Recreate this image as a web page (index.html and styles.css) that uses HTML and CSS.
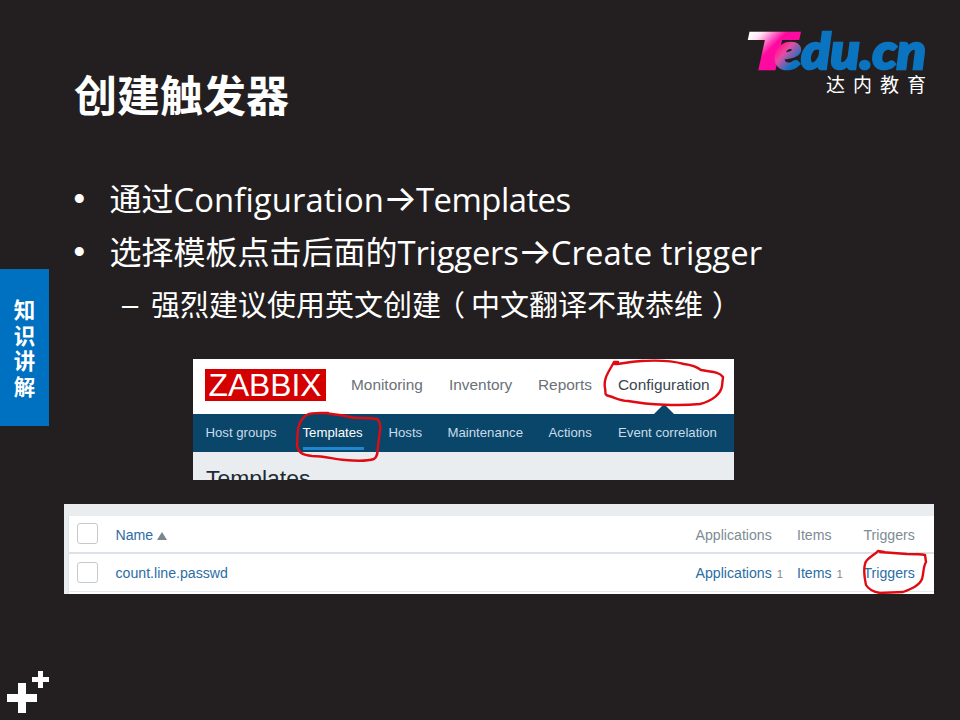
FILE: index.html
```html
<!DOCTYPE html>
<html lang="zh-CN">
<head>
<meta charset="utf-8">
<title>创建触发器</title>
<link rel="stylesheet" href="styles.css">
</head>
<body>
<main class="slide">
  <header class="header">
    <h1 class="title">创建触发器</h1>
    <svg class="logo" viewBox="745 25 185 75" role="img">
      <defs>
        <linearGradient id="tee" gradientUnits="userSpaceOnUse" x1="752" y1="32" x2="774" y2="54">
          <stop offset="0" stop-color="#fff"/><stop offset=".25" stop-color="#ffe3f4"/><stop offset=".8" stop-color="#ff0aa0"/><stop offset="1" stop-color="#ff0aa0"/>
        </linearGradient>
        <linearGradient id="edu" gradientUnits="userSpaceOnUse" x1="779" y1="48" x2="795" y2="62">
          <stop offset="0" stop-color="#ff1c8e"/><stop offset=".35" stop-color="#e34fa5"/><stop offset="1" stop-color="#0a74c0"/>
        </linearGradient>
      </defs>
      <text class="brand tee" x="745.5" y="69" font-size="50" textLength="50" lengthAdjust="spacingAndGlyphs" fill="url(#tee)" stroke="url(#tee)">T</text>
      <text class="brand heavy" x="775" y="69" font-size="49.5" textLength="151" lengthAdjust="spacingAndGlyphs" fill="url(#edu)" stroke="url(#edu)">edu.cn</text>
      <text class="brand-cn" x="826" y="92" font-size="19" textLength="100">达内教育</text>
    </svg>
  </header>

  <aside class="tab"><span>知</span><span>识</span><span>讲</span><span>解</span></aside>

  <section class="content">
    <ul class="points">
      <li class="point"><span class="dot">•</span><p>通过<span class="latin config">Configuration</span><span class="arrow">→</span><span class="latin templates">Templates</span></p></li>
      <li class="point"><span class="dot">•</span><p>选择模板点击后面的<span class="latin triggers">Triggers</span><span class="arrow">→</span><span class="latin create">Create trigger</span></p></li>
      <li class="point sub"><span class="dash">–</span><p>强烈建议使用英文创建<span class="open">（</span>中文翻译不敢恭维<span class="close">）</span></p></li>
    </ul>

    <div class="shot menu-shot">
      <nav class="main-nav">
        <span class="zabbix"><svg viewBox="0 0 121 32"><text x="3.5" y="27.2" textLength="113" lengthAdjust="spacingAndGlyphs">ZABBIX</text></svg></span>
        <span>Monitoring</span><span>Inventory</span><span>Reports</span><span class="current">Configuration</span>
      </nav>
      <nav class="sub-nav">
        <span>Host groups</span><span class="active">Templates</span><span>Hosts</span><span>Maintenance</span><span>Actions</span><span>Event correlation</span>
      </nav>
      <h2 class="heading">Templates</h2>
      <svg class="marks" viewBox="193 359 541 121">
        <path d="M653 415l11-11 11 11z" fill="#0a466a"/>
        <g class="pen">
          <path d="M618 362 L614 362 C610 370 603 378 605 388 C606 393 604 395 609 396 C616 398 620 401 628 401 C650 405 680 406 700 404 C712 401 721 394 722 386 L723 377 C719 371 710 372 701 370 C697 367 692 365 684 364 C665 359 648 361 642 361 C632 361 622 364 615 364"/>
          <path d="M328 413 C318 413 308 412 304 417 C296 425 298 436 297 445 C298 453 303 455 312 456 C325 456 333 459 345 460 C356 461 368 461 374 459 C379 456 377 449 379 438 C380 431 382 422 377 419 C365 417 358 419 350 417 C338 414 333 415 326 413"/>
        </g>
      </svg>
    </div>

    <div class="shot table-shot">
      <div class="table">
        <div class="row head"><i class="check"></i><span class="link">Name <b class="sort"></b></span><span>Applications</span><span>Items</span><span>Triggers</span></div>
        <div class="row"><i class="check"></i><span class="link">count.line.passwd</span><span class="link">Applications <small>1</small></span><span class="link">Items <small>1</small></span><span class="link">Triggers</span></div>
      </div>
      <svg class="marks" viewBox="64 504 870 90">
        <path class="pen" d="M884 552 L878 551 C875 555 866 558 865 564 C863 572 865 580 866 585 C869 590 874 592 880 593 L903 592 C911 589 919 586 922 579 C924 572 923 567 926 562 L925 555 C920 554 914 554 907 554 L880 552"/>
      </svg>
    </div>
  </section>

  <footer class="footer">
    <svg class="crosses" viewBox="0 0 60 60"><path d="M18 23h8v11h11v8H26v11h-8V42H7v-8h11zM38 11h5v6h6v5h-6v6h-5v-6h-6v-5h6z" fill="#fff"/></svg>
  </footer>
</main>
</body>
</html>
```
FILE: styles.css
```css
* { box-sizing: border-box; }
body { margin: 0; background: #231f20; }
p, h1, h2, ul { margin: 0; padding: 0; }

.slide {
  width: 960px;
  height: 720px;
  overflow: hidden;
  display: grid;
  grid-template-columns: 64px 870px;
  grid-template-rows: 172px 488px 60px;
  background: #231f20;
  color: #fff;
  font-family: "Noto Sans CJK SC", sans-serif;
}

.header {
  grid-column: 1 / -1;
  width: 960px;
  display: flex;
  justify-content: space-between;
  padding: 25px 30px 0 74px;
}
.title { font-size: 43px; line-height: 60px; margin-top: 38px; font-weight: 700; white-space: nowrap; }
.logo { width: 185px; height: 75px; overflow: visible; }
.brand { font-family: Lato, sans-serif; font-weight: 900; font-style: italic; }
.tee { stroke-width: 2.4; }
.heavy { stroke-width: 2.6; }
.brand-cn { font-family: "Noto Sans CJK SC", sans-serif; fill: #fff; }

.tab {
  width: 49px;
  height: 157px;
  margin-top: 97px;
  padding-top: 27px;
  background: #0070c0;
  display: flex;
  flex-direction: column;
  align-items: center;
  font-size: 21.5px;
  font-weight: 700;
  line-height: 25.5px;
}

.points { list-style: none; height: 188px; margin-top: -1px; }
.point { display: flex; height: 53px; line-height: 53px; font-size: 32px; white-space: nowrap; }
.dot { width: 45.5px; padding-left: 9.5px; font-family: "Liberation Sans", sans-serif; font-size: 33px; line-height: 55px; }
.latin { position: relative; top: 1px; font-family: "Open Sans", sans-serif; font-size: 32.8px; line-height: 1; }
.config { letter-spacing: .1px; }
.templates { letter-spacing: -.5px; }
.triggers { letter-spacing: -.2px; }
.create { letter-spacing: .1px; }
.arrow {
  display: inline-block;
  width: 32px;
  text-align: center;
  text-indent: -1px;
  font-family: Inter, sans-serif;
  font-size: 36px;
  font-weight: 400;
  line-height: 1;
}
.sub { font-size: 29px; }
.dash { width: 87px; padding-left: 58px; font-family: "Liberation Sans", sans-serif; line-height: 57px; }
.open { display: inline-block; width: 30px; text-indent: -5px; }
.close { display: inline-block; padding-left: 9px; }

.shot { position: relative; overflow: hidden; font-family: "Liberation Sans", sans-serif; }
.marks { position: absolute; inset: 0; width: 100%; height: 100%; }
.pen { fill: none; stroke: #e00b12; stroke-width: 2.4; stroke-linecap: round; stroke-linejoin: round; }

.menu-shot { width: 541px; height: 121px; margin-left: 129px; background: #e9edf0; }
.main-nav {
  height: 55px;
  padding-left: 12px;
  display: grid;
  grid-template-columns: 146px 98px 89px 80px auto;
  align-items: center;
  background: #fff;
  color: #6a7178;
  font-size: 15.4px;
  line-height: 52px;
}
.main-nav > span { height: 52px; align-self: start; }
.main-nav .zabbix { width: 121px; height: 32px; margin-top: 10px; background: #d40000; line-height: 0; }
.zabbix svg { width: 121px; height: 32px; }
.zabbix text { fill: #fff; font: 32px "Liberation Sans", sans-serif; }
.main-nav .current { color: #3c4650; }
.sub-nav {
  height: 38px;
  padding-left: 12.5px;
  display: grid;
  grid-template-columns: 97px 86px 59px 101px 69.5px auto;
  background: #0a466a;
  color: #c9dce8;
  font-size: 13.2px;
  line-height: 38px;
  white-space: nowrap;
}
.sub-nav .active { width: 61px; height: 36px; border-bottom: 3px solid #1e87cf; color: #fff; }
.heading { padding: 11px 0 0 13px; font-size: 22.9px; line-height: 30px; font-weight: 400; color: #1f2c33; }

.table-shot { width: 870px; height: 90px; margin-top: 24px; padding: 12px 0 0 4px; background: #e9edf0; }
.table { height: 78px; background: #fff; border-left: 1px solid #dfe4e7; }
.row {
  height: 38px;
  padding-left: 8px;
  display: grid;
  grid-template-columns: 38.5px 580px 101.5px 66.5px auto;
  font-size: 14.15px;
  line-height: 38px;
  color: #7e8b94;
  border-bottom: 1px solid #e6eaed;
}
.row.head { height: 38px; border-bottom: 2px solid #dce2e7; }
.check { width: 21px; height: 21px; margin-top: 7px; border: 1.5px solid #c3cacf; border-radius: 3px; }
.row:not(.head) .check { margin-top: 8px; }
.link { color: #2c6da5; }
.link small { font-size: 11.5px; margin-left: 1px; color: #7e8b94; }
.sort { display: inline-block; border: 5.5px solid transparent; border-top: 0; border-bottom: 8px solid #78868e; }

.footer { grid-column: 1 / -1; }
.crosses { display: block; width: 60px; height: 60px; }
```
